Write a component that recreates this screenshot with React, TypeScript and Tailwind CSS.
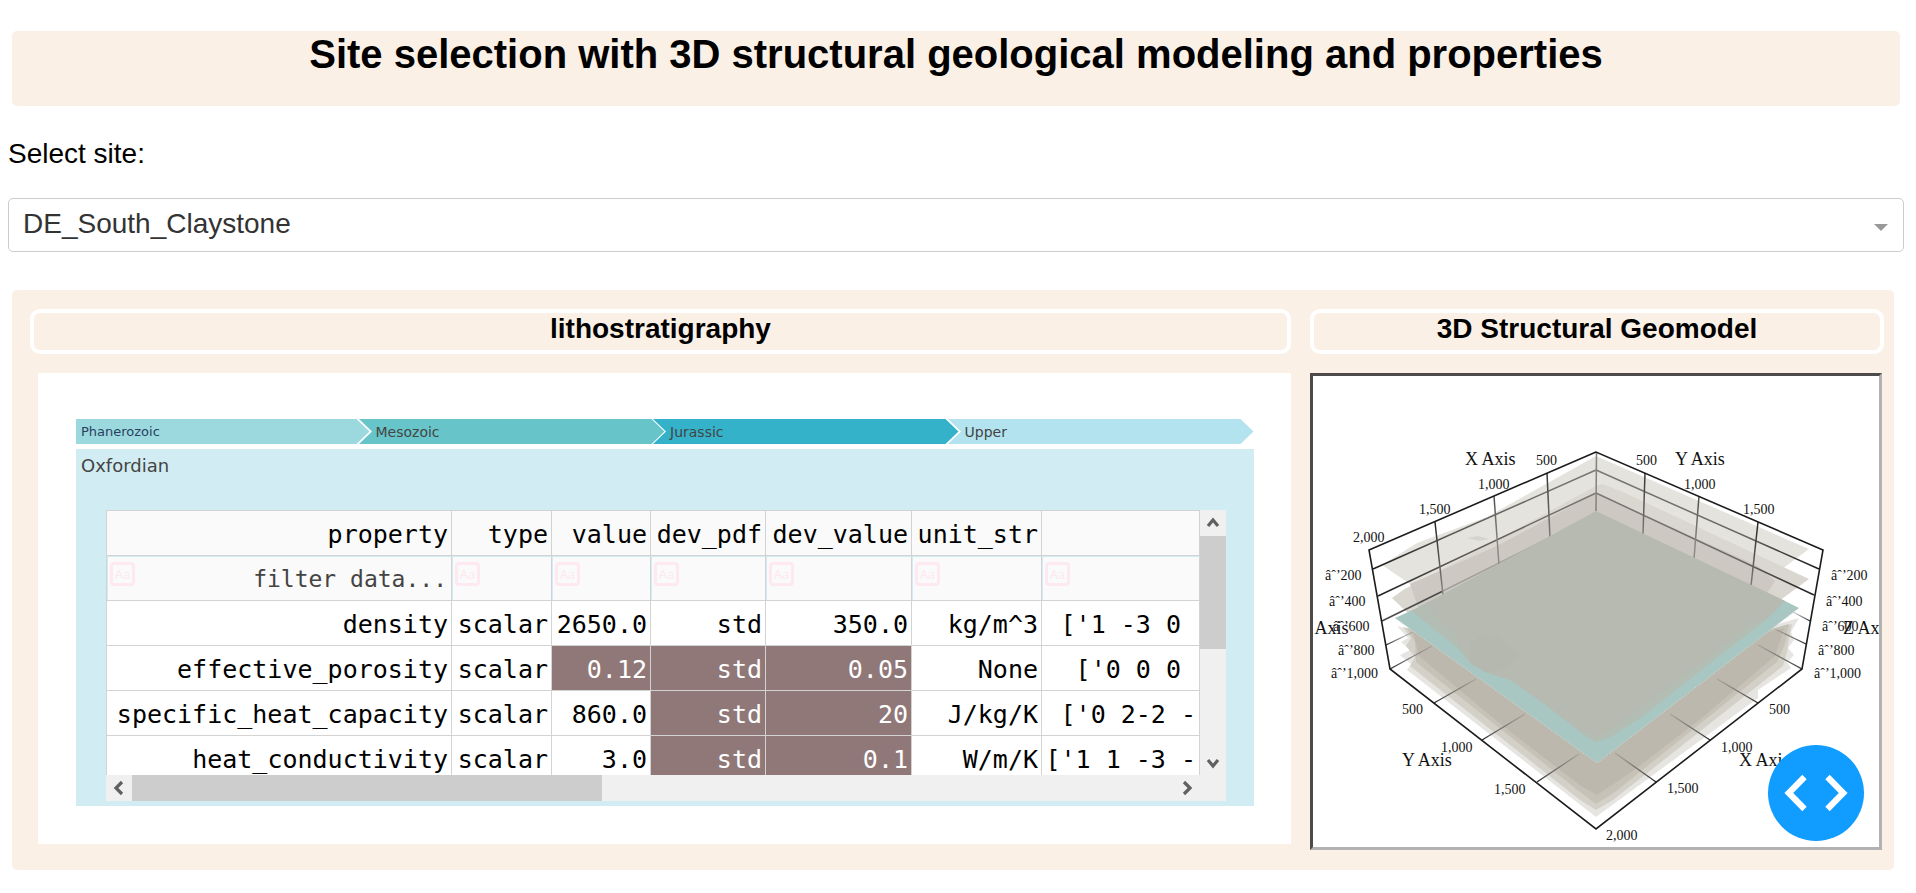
import React from "react";

type Tone = "plain" | "derived";
type Row = { property: string; cells: { text: string; tone?: Tone }[] };

const columns = ["property", "type", "value", "dev_pdf", "dev_value", "unit_str", ""];

const rows: Row[] = [
  {
    property: "density",
    cells: [{ text: "scalar" }, { text: "2650.0" }, { text: "std" }, { text: "350.0" }, { text: "kg/m^3" }, { text: "['1 -3 0 " }],
  },
  {
    property: "effective_porosity",
    cells: [
      { text: "scalar" },
      { text: "0.12", tone: "derived" },
      { text: "std", tone: "derived" },
      { text: "0.05", tone: "derived" },
      { text: "None" },
      { text: "['0 0 0 " },
    ],
  },
  {
    property: "specific_heat_capacity",
    cells: [
      { text: "scalar" },
      { text: "860.0" },
      { text: "std", tone: "derived" },
      { text: "20", tone: "derived" },
      { text: "J/kg/K" },
      { text: "['0 2-2 -" },
    ],
  },
  {
    property: "heat_conductivity",
    cells: [
      { text: "scalar" },
      { text: "3.0" },
      { text: "std", tone: "derived" },
      { text: "0.1", tone: "derived" },
      { text: "W/m/K" },
      { text: "['1 1 -3 -" },
    ],
  },
];

const crumbs = [
  { label: "Phanerozoic", fill: "fill-[#9bd9de]", text: "text-[13px] text-[#2a3f5f]" },
  { label: "Mesozoic", fill: "fill-[#67c5ca]", text: "text-sm text-[#444444]" },
  { label: "Jurassic", fill: "fill-[#34b2c9]", text: "text-sm text-[#444444]" },
  { label: "Upper", fill: "fill-[#b3e3ee]", text: "text-sm text-[#444444]" },
];

function Crumb({ label, fill, text, first }: { label: string; fill: string; text: string; first: boolean }) {
  return (
    <li className="flex h-full min-w-0 flex-1">
      <a href="#" className="relative flex w-full items-center">
        <svg className={`absolute inset-0 h-full w-full overflow-visible ${fill}`} preserveAspectRatio="none" viewBox="0 0 294 25" aria-hidden="true">
          <path d={first ? "M0 0H280L293 12.5L280 25H0Z" : "M-12 0H280L293 12.5L280 25H-12L1 12.5Z"} />
        </svg>
        <span className={`relative pt-px pl-[5px] leading-6 ${text}`}>{label}</span>
      </a>
    </li>
  );
}

function CaseToggle() {
  return (
    <button
      type="button"
      aria-label="Toggle case sensitivity"
      className="flex h-6 w-[25px] shrink-0 items-center justify-center rounded-[4px] border-[3px] border-[#fde9ef] font-['Open_Sans',sans-serif] text-[13px] leading-none text-[#fde9ef]"
    >
      Aa
    </button>
  );
}

function Arrow({ d }: { d: string }) {
  return (
    <svg width="26" height="26" viewBox="0 0 26 26" fill="none" stroke="#606060" strokeWidth="3.2" aria-hidden="true">
      <path d={d} />
    </svg>
  );
}

function PropertyTable() {
  return (
    <div className="grid h-[291px] grid-cols-[minmax(0,1fr)_26px] grid-rows-[minmax(0,1fr)_26px] bg-[#f0f0f0]">
      <div className="overflow-hidden bg-white">
        <table className="w-full table-fixed border-collapse border border-[#d3d3d3] font-['DejaVu_Sans_Mono',monospace] text-[25px] text-black">
          <colgroup>
            <col className="w-[345px]" />
            <col className="w-[100px]" />
            <col className="w-[99px]" />
            <col className="w-[115px]" />
            <col className="w-[146px]" />
            <col className="w-[130px]" />
            <col />
          </colgroup>
          <thead>
            <tr className="h-[45px] bg-[#fafafa]">
              {columns.map((c, i) => (
                <th key={i} scope="col" className="border border-[#d3d3d3] p-0 pt-1 pr-[3px] text-right font-normal whitespace-pre">
                  {c}
                </th>
              ))}
            </tr>
            <tr className="h-[45px] bg-[#fafafa]">
              {columns.map((c, i) => (
                <td key={i} className="border border-[#d3d3d3] p-0 shadow-[inset_1px_1px_0_#d1edf3]">
                  <div className="flex h-[44px] items-start pt-1.5 pr-1 pl-[3px]">
                    <CaseToggle />
                    <input
                      aria-label={`Filter ${c || "unit"}`}
                      placeholder={i === 0 ? "filter data..." : ""}
                      className="h-[34px] w-full min-w-0 bg-transparent text-right text-[23px] outline-none placeholder:text-[#444444]"
                    />
                  </div>
                </td>
              ))}
            </tr>
          </thead>
          <tbody>
            {rows.map((r) => (
              <tr key={r.property} className="h-[45px]">
                <td className="border border-[#d3d3d3] p-0 pt-1 pr-[3px] text-right">{r.property}</td>
                {r.cells.map((c, i) => (
                  <td
                    key={i}
                    className={`border border-[#d3d3d3] p-0 pt-1 pr-[3px] text-right whitespace-pre ${c.tone === "derived" ? "bg-[#917878] text-white" : ""}`}
                  >
                    {c.text}
                  </td>
                ))}
              </tr>
            ))}
          </tbody>
        </table>
      </div>
      <div className="flex flex-col">
        <Arrow d="M8 16L13 10L18 16" />
        <div className="h-[113px] bg-[#cdcdcd]" />
        <div className="mt-auto">
          <Arrow d="M8 11L13 17L18 11" />
        </div>
      </div>
      <div className="flex">
        <Arrow d="M16 7L10 13L16 19" />
        <div className="w-[43%] bg-[#cdcdcd]" />
        <div className="ml-auto">
          <Arrow d="M10 7L16 13L10 19" />
        </div>
      </div>
    </div>
  );
}

const ticks: [number, number, string][] = [
  [223, 89, "500"], [165, 113, "1,000"], [106, 138, "1,500"], [40, 166, "2,000"],
  [323, 89, "500"], [371, 113, "1,000"], [430, 138, "1,500"],
  [12, 204, "âˆ’200"], [16, 230, "âˆ’400"], [20, 255, "âˆ’600"], [25, 279, "âˆ’800"], [18, 302, "âˆ’1,000"],
  [518, 204, "âˆ’200"], [513, 230, "âˆ’400"], [509, 255, "âˆ’600"], [505, 279, "âˆ’800"], [501, 302, "âˆ’1,000"],
  [89, 338, "500"], [128, 376, "1,000"], [181, 418, "1,500"],
  [456, 338, "500"], [408, 376, "1,000"], [354, 417, "1,500"], [293, 464, "2,000"],
];

const axes: [number, number, string][] = [
  [152, 89, "X Axis"], [362, 89, "Y Axis"], [89, 390, "Y Axis"], [426, 390, "X Axis"], [530, 258, "Z Axis"], [-13, 258, "Z Axis"],
];

function Geomodel() {
  return (
    <svg viewBox="0 0 566 471" className="block h-full w-full" role="img" aria-label="3D structural geomodel">
      <defs>
        <linearGradient id="fadeRight" x1="0" x2="1">
          <stop offset="0" stopColor="#222" />
          <stop offset="1" stopColor="#777" stopOpacity="0.3" />
        </linearGradient>
        <linearGradient id="fadeLeft" x1="1" x2="0">
          <stop offset="0" stopColor="#222" />
          <stop offset="1" stopColor="#777" stopOpacity="0.3" />
        </linearGradient>
        <linearGradient id="toBackLeft" gradientUnits="userSpaceOnUse" x1="60" x2="283" y1="0" y2="0">
          <stop offset="0" stopColor="#1c1c1c" />
          <stop offset="0.35" stopColor="#5a5956" />
          <stop offset="1" stopColor="#7b7873" />
        </linearGradient>
        <linearGradient id="toBackRight" gradientUnits="userSpaceOnUse" x1="506" x2="283" y1="0" y2="0">
          <stop offset="0" stopColor="#1c1c1c" />
          <stop offset="0.35" stopColor="#6a6864" />
          <stop offset="1" stopColor="#7b7873" />
        </linearGradient>
        <linearGradient id="down" gradientUnits="userSpaceOnUse" x1="0" x2="0" y1="95" y2="170">
          <stop offset="0" stopColor="#333" />
          <stop offset="1" stopColor="#8d8984" />
        </linearGradient>
        <linearGradient id="downOuter" gradientUnits="userSpaceOnUse" x1="0" x2="0" y1="145" y2="220">
          <stop offset="0" stopColor="#222" />
          <stop offset="1" stopColor="#8d8984" />
        </linearGradient>
      </defs>

      <path d="M283 80L496 173L445 211L283 300L130 231L97 208L69 189L104 167L174 141Z" fill="#e4e3de" />
      <path d="M283 110L289 108L310 116L496 203L462 228L283 320L120 245L98 240L79 222L90 214L184 164Z" fill="#dad6d0" />
      <path d="M283 117L445 190L462 205L440 240L283 330L110 245L97 208L184 170Z" fill="#cdc8c2" />
      <path d="M154 162L165 160L176 163L166 165Z" fill="#d6d4cf" />

      <g strokeWidth="1.5" fill="none">
        <path d="M60 193L283 94M65 220L283 117" stroke="url(#toBackLeft)" />
        <path d="M69 245L130 215" stroke="#4a4a48" />
        <path d="M130 215L236 162" stroke="#a39e98" />
        <path d="M283 94L506 193M283 117L501 219" stroke="url(#toBackRight)" />
        <path d="M181 120L186 189M234 97L237 162M332 97L330 158M386 120L381 183" stroke="url(#down)" />
        <path d="M122 146L130 219M445 146L438 210" stroke="url(#downOuter)" />
        <path d="M283.500 76L283 135" stroke="#85817c" />
      </g>

      <path d="M84 250L95 262L88 266L97 274L87 279L98 288L94 294L283 441L445 322V314L478 292L474 286L481 279L475 272L481 264L478 256L486 242L283 300Z" fill="#e6e5e1" />
      <path d="M90 251L98 262L93 270L102 281L97 290L267 424L283 434L300 424L470 290L474 276L476 262L479 248L283 300Z" fill="#d3d0c8" />
      <path d="M94 252L102 266L103 286L267 416L283 428L302 416L464 286L472 268L476 248L283 300Z" fill="#c6c2b7" />
      <path d="M100 256L106 280L190 350L268 410L284 419L320 395L390 341L462 280L471 252L283 300Z" fill="#bdb8ad" />

      <g strokeWidth="1.3" fill="none" stroke="url(#fadeLeft)">
        <path d="M497 245L480 236" />
        <path d="M493 268L462 253" />
        <path d="M489 293L445 269" />
        <path d="M445 327L404 303" />
        <path d="M397 364L357 338" />
        <path d="M343 406L302 377" />
      </g>
      <g strokeWidth="1.3" fill="none" stroke="url(#fadeRight)">
        <path d="M73 269L100 256" />
        <path d="M77 293L119 270" />
        <path d="M121 327L163 303" />
        <path d="M169 364L212 338" />
        <path d="M224 406L266 378" />
      </g>

      <path d="M82 242L104 232L283 140L470 224L486 232L284 387Z" fill="#a8c6c2" />
      <path
        d="M283 135L472 225L454 243L397 287L330 340L297 361L283 366L274 361L230 327L197 304L172 296L157 287L144 271L125 256L99 235Z"
        fill="#b6bab0"
      />
      <path d="M283 366L274 361L266 354L284 361L310 345L440 247L454 243L397 287L330 340L297 361Z" fill="#b0bfb6" fillOpacity="0.6" />
      <path d="M99 235L112 230L140 256L157 287L144 271L125 256Z" fill="#b0bfb6" fillOpacity="0.5" />
      <path d="M157 268L168 260L185 262L206 278L200 288L185 296L172 296L157 287Z" fill="#b1b5a9" fillOpacity="0.2" />
      <path d="M82 242L284 387L486 232" fill="none" stroke="#d3dedb" strokeWidth="0.8" strokeDasharray="1.5 1.5" />

      <path d="M283 76L56 174L77 293L283 453L489 293L510 174Z" stroke="#1c1c1c" strokeWidth="1.6" fill="none" />

      <g className="fill-[#111111] font-['Liberation_Serif',serif] text-[14px]">
        {ticks.map(([x, y, t], i) => (
          <text key={i} x={x} y={y}>
            {t}
          </text>
        ))}
      </g>
      <g className="fill-[#111111] font-['Liberation_Serif',serif] text-[18px]">
        {axes.map(([x, y, t], i) => (
          <text key={i} x={x} y={y}>
            {t}
          </text>
        ))}
      </g>
    </svg>
  );
}

function PanelTitle({ children }: { children: React.ReactNode }) {
  return (
    <h2 className="h-[45px] rounded-[10px] border-4 border-white text-center text-[28px] leading-8 font-bold">{children}</h2>
  );
}

export default function App() {
  return (
    <div className="min-h-screen bg-white pt-[31px] pr-3 pl-2 font-['Liberation_Sans',Arial,sans-serif] text-black">
      <header className="mx-1 h-[75px] rounded-[5px] bg-[#faf0e6]">
        <h1 className="text-center text-[40px] leading-[46px] font-bold">Site selection with 3D structural geological modeling and properties</h1>
      </header>

      <label htmlFor="site" className="mt-8 block text-[28px] leading-8">
        Select site:
      </label>
      <div className="relative mt-7">
        <select id="site" className="block h-[54px] w-full appearance-none rounded-[5px] border border-[#cccccc] bg-white pr-10 pb-0.5 pl-3.5 text-[28px] text-[#333333]">
          <option>DE_South_Claystone</option>
        </select>
        <svg className="pointer-events-none absolute top-[26px] right-4" width="14" height="7" viewBox="0 0 14 7" fill="#999999" aria-hidden="true">
          <path d="M0 0H14L7 7Z" />
        </svg>
      </div>

      <main className="mt-[38px] mr-[10px] ml-1 flex items-start gap-[19px] rounded-[5px] bg-[#faf0e6] pt-[19px] pr-[10px] pb-5 pl-[18px]">
        <section className="min-w-0 grow-[1261] basis-0">
          <PanelTitle>lithostratigraphy</PanelTitle>
          <div className="mt-[19px] ml-2 h-[471px] bg-white pt-[46px] pr-[37px] pl-[38px] font-['DejaVu_Sans',Verdana,sans-serif]">
            <nav aria-label="Stratigraphic path">
              <ol className="flex h-[25px]">
                {crumbs.map((c, i) => (
                  <Crumb key={c.label} {...c} first={i === 0} />
                ))}
              </ol>
            </nav>
            <div className="mt-[5px] h-[357px] bg-[#d1edf3] pr-7 pl-[30px]">
              <h3 className="-ml-[25px] h-[61px] pt-[5px] text-lg leading-6 text-[#444444]">Oxfordian</h3>
              <PropertyTable />
            </div>
          </div>
        </section>
        <section className="min-w-0 grow-[574] basis-0">
          <PanelTitle>3D Structural Geomodel</PanelTitle>
          <div className="mt-[19px] mr-0.5 h-[477px] overflow-hidden border-[3px] border-t-[#4c4a4a] border-r-[#b2b2b2] border-b-[#b2b2b2] border-l-[#4c4a4a] bg-white">
            <Geomodel />
          </div>
        </section>
      </main>

      <button
        type="button"
        aria-label="Open developer tools"
        className="fixed right-[52px] bottom-[52px] flex h-24 w-24 items-center justify-center rounded-full bg-[#119dff]"
      >
        <svg width="64" height="40" viewBox="0 0 64 40" fill="none" stroke="white" strokeWidth="6.2" aria-hidden="true">
          <path d="M20.500 4L4.800 20L20.500 36M43.500 4L59.200 20L43.500 36" />
        </svg>
      </button>
    </div>
  );
}
